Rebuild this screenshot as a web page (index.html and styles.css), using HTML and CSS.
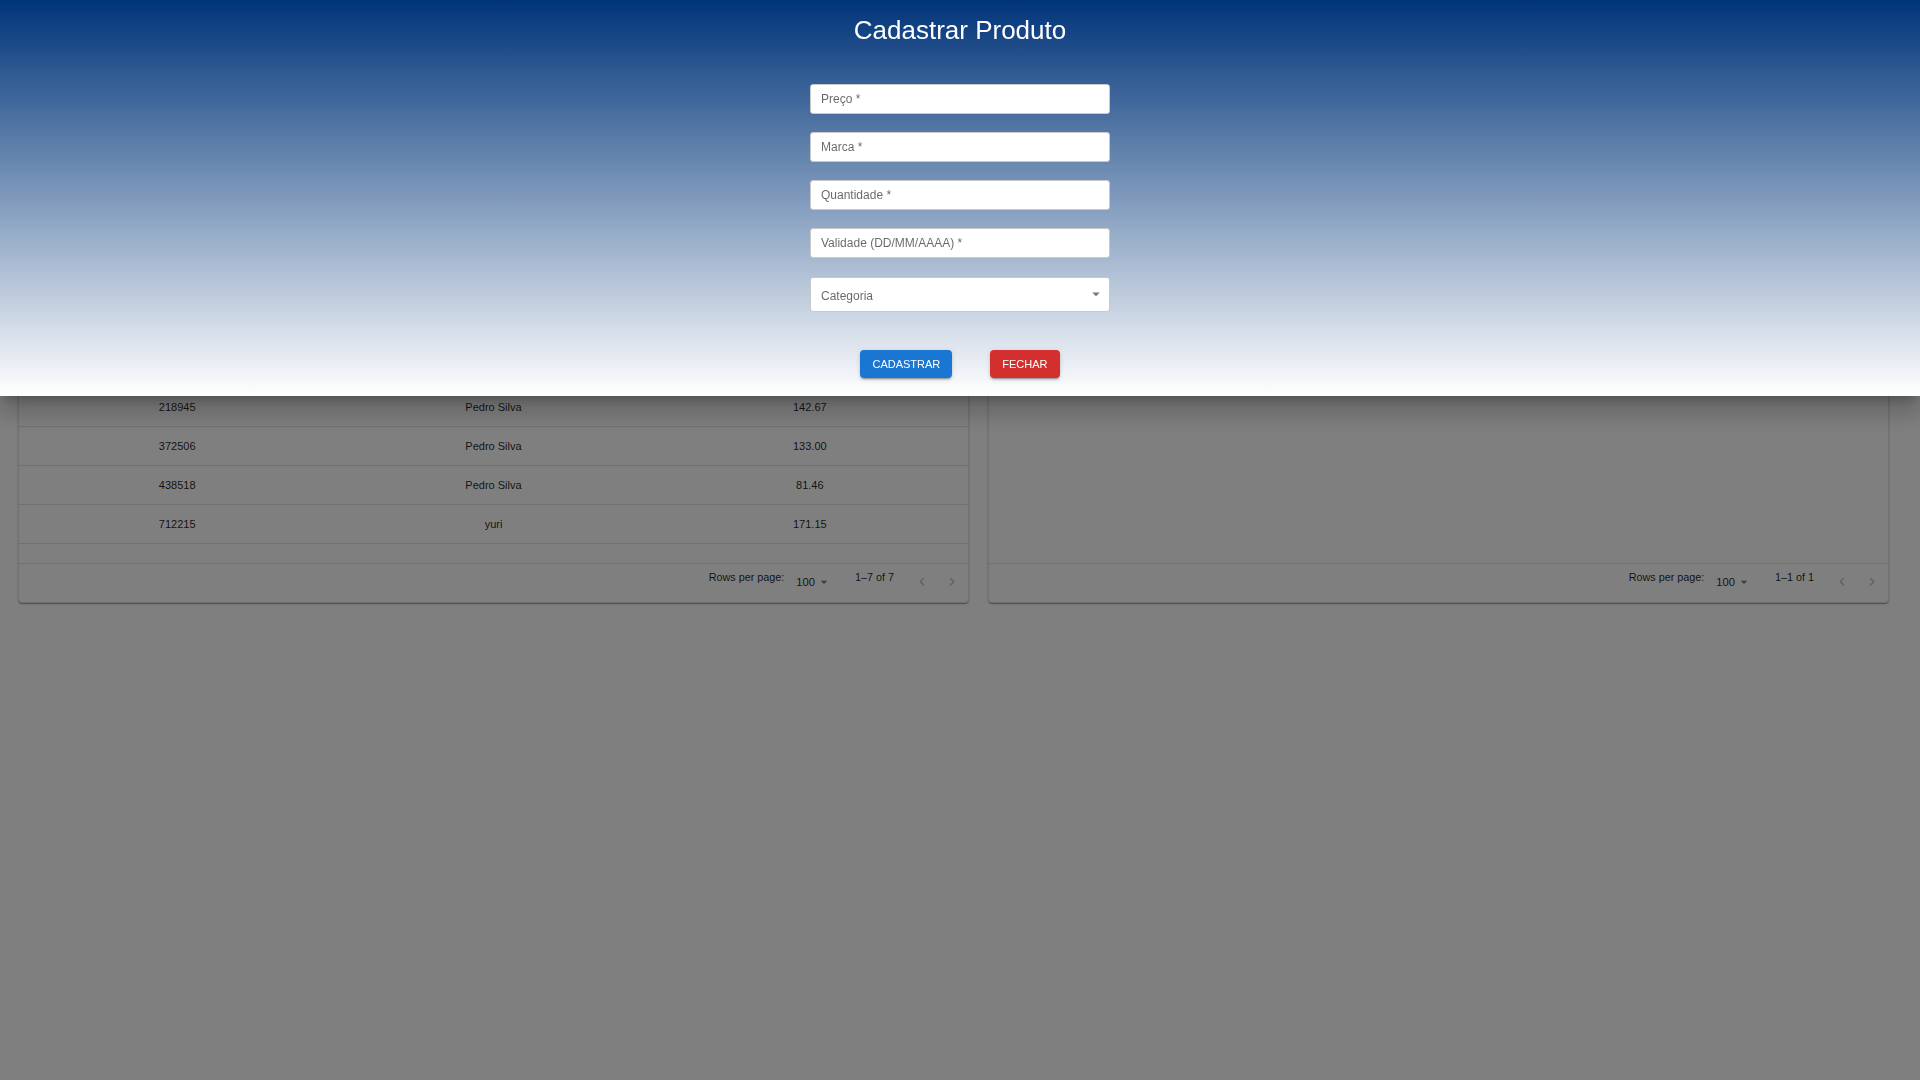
FILE: index.html
```html
<!DOCTYPE html>
<html lang="pt-BR">
<head>
<meta charset="utf-8">
<title>Cadastrar Produto</title>
<link rel="stylesheet" href="styles.css">
</head>
<body>
<div class="page">
  <header class="page-head">
    <h1 class="page-title">Produtos</h1>
  </header>
  <main class="grids">
    <section class="card">
      <div class="grid-head">
        <div class="cell">Código</div><div class="cell">Vendedor</div><div class="cell">Preço</div>
      </div>
      <div class="grid-body">
        <div class="row"><div class="cell">104211</div><div class="cell">Maria</div><div class="cell">99.90</div></div>
        <div class="row"><div class="cell">150377</div><div class="cell">Pedro Silva</div><div class="cell">120.00</div></div>
        <div class="row"><div class="cell">201934</div><div class="cell">Pedro Silva</div><div class="cell">75.50</div></div>
        <div class="row"><div class="cell">218945</div><div class="cell">Pedro Silva</div><div class="cell">142.67</div></div>
        <div class="row"><div class="cell">372506</div><div class="cell">Pedro Silva</div><div class="cell">133.00</div></div>
        <div class="row"><div class="cell">438518</div><div class="cell">Pedro Silva</div><div class="cell">81.46</div></div>
        <div class="row"><div class="cell">712215</div><div class="cell">yuri</div><div class="cell">171.15</div></div>
      </div>
      <div class="grid-foot">
        <span class="foot-label">Rows per page:</span>
        <span class="foot-select">100<svg class="foot-caret" viewBox="0 0 24 24"><path d="M7 10l5 5 5-5z"/></svg></span>
        <span class="foot-count">1–7 of 7</span>
        <span class="foot-nav"><svg viewBox="0 0 24 24"><path d="M15.41 16.09l-4.58-4.59 4.58-4.59L14 5.5l-6 6 6 6z"/></svg></span>
        <span class="foot-nav"><svg viewBox="0 0 24 24"><path d="M8.59 16.34l4.58-4.59-4.58-4.59L10 5.75l6 6-6 6z"/></svg></span>
      </div>
    </section>
    <section class="card">
      <div class="grid-head">
        <div class="cell">Categoria</div><div class="cell">Descrição</div>
      </div>
      <div class="grid-body">
        <div class="row"><div class="cell">1</div><div class="cell">Alimentos</div></div>
      </div>
      <div class="grid-foot">
        <span class="foot-label">Rows per page:</span>
        <span class="foot-select">100<svg class="foot-caret" viewBox="0 0 24 24"><path d="M7 10l5 5 5-5z"/></svg></span>
        <span class="foot-count">1–1 of 1</span>
        <span class="foot-nav"><svg viewBox="0 0 24 24"><path d="M15.41 16.09l-4.58-4.59 4.58-4.59L14 5.5l-6 6 6 6z"/></svg></span>
        <span class="foot-nav"><svg viewBox="0 0 24 24"><path d="M8.59 16.34l4.58-4.59-4.58-4.59L10 5.75l6 6-6 6z"/></svg></span>
      </div>
    </section>
  </main>
</div>

<div class="backdrop"></div>

<div class="drawer">
  <h2 class="drawer-title">Cadastrar Produto</h2>
  <form class="form">
    <div class="field">Preço *</div>
    <div class="field">Marca *</div>
    <div class="field">Quantidade *</div>
    <div class="field">Validade (DD/MM/AAAA) *</div>
    <div class="field select">Categoria<svg class="select-caret" viewBox="0 0 24 24"><path d="M7 10l5 5 5-5z"/></svg></div>
    <div class="actions">
      <button type="button" class="btn btn-primary">Cadastrar</button>
      <button type="button" class="btn btn-danger">Fechar</button>
    </div>
  </form>
</div>
</body>
</html>
```

FILE: styles.css
```css
* { box-sizing: border-box; }
html, body { margin: 0; padding: 0; }
body {
  background: #ffffff;
  font-family: "Liberation Sans", Arial, sans-serif;
  color: rgba(0,0,0,0.87);
  width: 1920px;
  height: 1080px;
  overflow: hidden;
}

.page { padding: 0 31px 0 18px; }
.page-head { height: 214px; padding-top: 80px; }
.page-title { margin: 0; font-size: 24px; font-weight: 400; text-align: center; }

.grids {
  display: grid;
  grid-template-columns: 951px 901px;
  column-gap: 19px;
  align-items: start;
}

.card {
  background: #fff;
  border: 1px solid #e0e0e0;
  border-radius: 4px;
  box-shadow: 0 2px 1px -1px rgba(0,0,0,.2), 0 1px 1px 0 rgba(0,0,0,.14), 0 1px 3px 0 rgba(0,0,0,.12);
  font-size: 11px;
}

.grid-head, .row {
  display: grid;
  grid-auto-flow: column;
  grid-auto-columns: 1fr;
  border-bottom: 1px solid #e0e0e0;
}
.grid-head { height: 56px; font-weight: 700; }
.row { height: 39px; }
.cell {
  display: flex;
  align-items: center;
  justify-content: center;
}

.grid-body { height: 292px; }

.grid-foot {
  height: 39px;
  border-top: 1px solid #e0e0e0;
  display: flex;
  align-items: center;
  justify-content: flex-end;
  padding-right: 4px;
  padding-bottom: 3px;
  font-size: 10.8px;
}
.foot-label { padding-bottom: 10px; margin-right: 12px; }
.foot-select { display: flex; align-items: center; font-size: 11.2px; }
.foot-caret { width: 16px; height: 16px; fill: rgba(0,0,0,0.54); margin-left: 1px; }
.foot-count { padding-bottom: 10px; margin-left: 23px; margin-right: 16px; }
.foot-nav {
  width: 24px; height: 24px;
  display: flex; align-items: center; justify-content: center;
}
.foot-nav + .foot-nav { margin-left: 6px; }
.foot-nav svg { width: 16px; height: 16px; fill: rgba(0,0,0,0.26); }

.backdrop {
  position: fixed;
  inset: 0;
  background: rgba(0,0,0,0.5);
}

.drawer {
  position: fixed;
  top: 0; left: 0; right: 0;
  height: 396px;
  background: linear-gradient(180deg, #003479 0%, #ffffff 100%);
  box-shadow: 0 8px 10px -5px rgba(0,0,0,.2), 0 16px 24px 2px rgba(0,0,0,.14), 0 6px 30px 5px rgba(0,0,0,.12);
  display: flex;
  flex-direction: column;
  align-items: center;
  padding-top: 15px;
}
.drawer-title {
  margin: 0;
  color: #ffffff;
  font-size: 26px;
  line-height: 30px;
  font-weight: 400;
}

.form {
  margin-top: 39px;
  width: 300px;
  display: flex;
  flex-direction: column;
  align-items: stretch;
}
.field {
  height: 30px;
  background: #ffffff;
  border: 1px solid #c9c9c9;
  border-radius: 3px;
  display: flex;
  align-items: center;
  padding-left: 10px;
  font-size: 12px;
  color: rgba(0,0,0,0.6);
  margin-bottom: 18px;
}
.field.select {
  height: 35px;
  margin-top: 1px;
  padding-top: 2px;
  justify-content: space-between;
  padding-right: 4px;
  margin-bottom: 38px;
}
.select-caret { width: 18px; height: 18px; fill: rgba(0,0,0,0.54); margin-top: -3px; }

.actions {
  display: flex;
  justify-content: center;
  column-gap: 38px;
}
.btn {
  height: 28px;
  border: 0;
  border-radius: 4px;
  padding: 0 12px;
  font-family: "Liberation Sans", Arial, sans-serif;
  font-size: 11px;
  text-transform: uppercase;
  color: #ffffff;
  box-shadow: 0 3px 1px -2px rgba(0,0,0,.2), 0 2px 2px 0 rgba(0,0,0,.14), 0 1px 5px 0 rgba(0,0,0,.12);
}
.btn-primary { background: #1976d2; }
.btn-danger { background: #d32f2f; }
```
